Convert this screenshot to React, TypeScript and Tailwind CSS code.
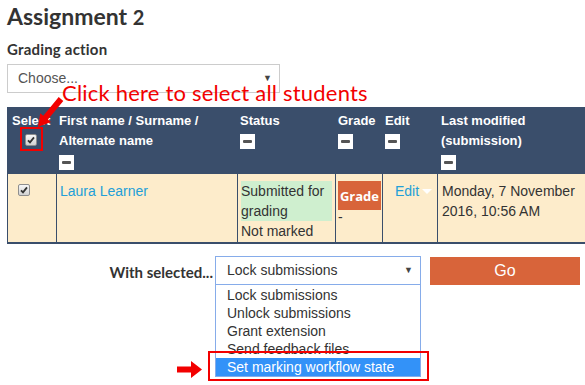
import React from "react";

const lato = "font-['Lato','Liberation_Sans',sans-serif]";

function Minus() {
  return (
    <span className="flex h-[15px] w-[15px] items-center justify-center bg-white">
      <span className="h-[3px] w-[9px] rounded-[1px] bg-[#555]" />
    </span>
  );
}

function Check() {
  return (
    <span className="flex h-[12px] w-[12px] items-center justify-center rounded-[2px] border border-[#8e8e8e] bg-linear-to-b from-[#f7f7f7] to-[#d2d2d2]">
      <svg width="8" height="8" viewBox="0 0 8 8">
        <path d="M1 4.3 L3 6.4 L7 1.4" fill="none" stroke="#333" strokeWidth="1.8" />
      </svg>
    </span>
  );
}

function Caret() {
  return <span className="text-[9px] leading-none text-[#444]">▼</span>;
}

const th = "bg-[#3a4e6b] pt-[4px] pb-[4px] text-left align-top font-bold text-[13px] leading-[20px] text-white";
const td = "border-b-2 border-l border-[#3a4e6b] bg-[#fdeccb] pt-[7px] pb-[1px] align-top";

const actions = ["Lock submissions", "Unlock submissions", "Grant extension", "Send feedback files", "Set marking workflow state"];

export default function App() {
  return (
    <div className="relative h-[385px] w-[585px] overflow-hidden bg-white font-['Liberation_Sans',Arial,sans-serif] text-[14px] text-[#333]">
      <h1 className={`${lato} pl-[7px] pt-[2px] text-[23px] font-bold leading-[28px] text-[#333]`}>
        Assignment <span className="text-[20px]">2</span>
      </h1>
      <div className={`${lato} mt-[9px] pl-[7px] text-[15px] font-bold leading-[18px] tracking-[0.2px]`}>Grading action</div>
      <div className="mt-[6px] ml-[7px] flex h-[29px] w-[273px] items-center justify-between border border-[#ccc] pl-[10px] pr-[7px] text-[#555]">
        <span>Choose...</span>
        <Caret />
      </div>

      <div className="mt-[14px] overflow-hidden pl-[7px]">
        <table className="w-[600px] table-fixed border-separate border-spacing-0 leading-[20px]">
          <colgroup>
            <col className="w-[49px]" />
            <col className="w-[181px]" />
            <col className="w-[98px]" />
            <col className="w-[47px]" />
            <col className="w-[55px]" />
            <col className="w-[170px]" />
          </colgroup>
          <thead>
            <tr>
              <th className={`${th} pl-[5px] whitespace-nowrap`}>
                Select
                <div className="mt-[3px] ml-[13px]"><Check /></div>
              </th>
              <th className={`${th} pl-[3px]`}>
                First name / Surname /<br />Alternate name
                <div className="mt-[4px]"><Minus /></div>
              </th>
              <th className={`${th} pl-[3px]`}>
                Status
                <div className="mt-[3px]"><Minus /></div>
              </th>
              <th className={`${th} pl-[3px]`}>
                Grade
                <div className="mt-[3px]"><Minus /></div>
              </th>
              <th className={`${th} pl-[3px]`}>
                Edit
                <div className="mt-[3px]"><Minus /></div>
              </th>
              <th className={`${th} pl-[4px]`}>
                Last modified<br />(submission)
                <div className="mt-[4px]"><Minus /></div>
              </th>
            </tr>
          </thead>
          <tbody>
            <tr>
              <td className={`${td} pl-[10px]`}>
                <div className="mt-[3px]"><Check /></div>
              </td>
              <td className={`${td} pl-[3px] text-[#239fd8]`}>Laura Learner</td>
              <td className={`${td} px-[3px]`}>
                <div className="bg-[#cfefcf]">Submitted for grading</div>
                <div>Not marked</div>
              </td>
              <td className={`${td} pl-[2px] pr-[1px]`}>
                <div className="flex h-[29px] items-center justify-center bg-[#d8643a] font-['Open_Sans',sans-serif] text-[13px] font-bold text-white">Grade</div>
                <div className="leading-[14px]">-</div>
              </td>
              <td className={`${td} pl-[12px]`}>
                <span className="flex items-center gap-[3px] text-[#239fd8]">
                  Edit
                  <span className="h-0 w-0 border-x-[5px] border-t-[5px] border-x-transparent border-t-white" />
                </span>
              </td>
              <td className={`${td} pl-[4px]`}>Monday, 7 November 2016, 10:56 AM</td>
            </tr>
          </tbody>
        </table>
      </div>

      <div className="mt-[12px] flex items-start">
        <div className={`${lato} w-[213px] pt-[5px] text-right text-[15px] font-bold`}>With selected...</div>
        <div className="relative ml-[2px] w-[206px]">
          <div className="flex h-[29px] items-center justify-between border border-[#86acea] pl-[11px] pr-[7px]">
            <span>Lock submissions</span>
            <Caret />
          </div>
          <ul className="absolute left-0 top-full w-full border-x border-b border-[#86acea] bg-white pt-[1px]">
            {actions.map((a, i) => (
              <li
                key={a}
                className={`h-[18px] pl-[11px] leading-[18px] ${i === actions.length - 1 ? "bg-[#3392f8] text-white" : ""}`}
              >
                {a}
              </li>
            ))}
          </ul>
        </div>
        <button className="mt-[1px] ml-[9px] h-[28px] w-[150px] bg-[#d8643a] text-[16px] text-white">Go</button>
      </div>

      {/* annotations */}
      <div className={`${lato} absolute left-[62px] top-[79px] text-[22px] leading-[28px] tracking-[0.2px] text-[#f20000]`}>
        Click here to select all students
      </div>
      <svg className="absolute left-[30px] top-[95px]" width="36" height="36" viewBox="0 0 36 36">
        <polygon points="8,32 21,27.1 17.9,24.6 33.3,5.9 28.7,2.1 13.3,20.8 10.2,18.3" fill="#f20000" />
      </svg>
      <div className="absolute left-[20px] top-[127px] h-[24px] w-[23px] border-2 border-[#f20000]" />
      <div className="absolute left-[208px] top-[351px] h-[30px] w-[221px] border-2 border-[#f20000]" />
      <svg className="absolute left-[177px] top-[361px]" width="26" height="17" viewBox="0 0 26 17">
        <polygon points="0,5.5 14,5.5 14,0 25,8.5 14,17 14,11.5 0,11.5" fill="#f20000" />
      </svg>
    </div>
  );
}
